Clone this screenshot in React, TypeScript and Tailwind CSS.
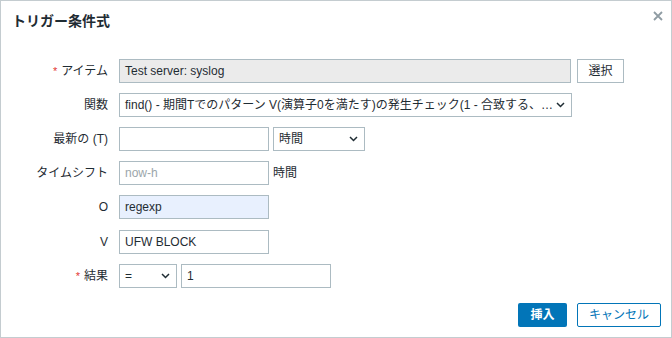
import React from "react";

const Chevron: React.FC = () => (
  <svg width="9" height="6" viewBox="0 0 9 6" className="shrink-0">
    <path d="M1 1l3.5 3.5L8 1" fill="none" stroke="#1f2c33" strokeWidth="1.5" />
  </svg>
);

const Label: React.FC<{ text: string; required?: boolean }> = ({ text, required }) => (
  <div className="w-[107px] shrink-0 text-right text-[#1f2c33]">
    {required && <span className="text-[#e33734] mr-[4px] text-[11px]">*</span>}
    {text}
  </div>
);

const inputCls =
  "h-[24px] border border-[#acbbc2] px-[5px] flex items-center text-[#1f2c33]";

const App: React.FC = () => {
  return (
    <div
      className="w-[672px] h-[338px] bg-white border border-[#c4ccd0] flex flex-col text-[12px]"
      style={{ fontFamily: '"Liberation Sans", Arial, "Noto Sans CJK JP", sans-serif' }}
    >
      <header className="h-[40px] flex items-center justify-between pl-[11px] pr-[8px] pt-[1px]">
        <h4 className="text-[14px] font-bold text-[#1f2c33]">トリガー条件式</h4>
        <svg width="10" height="10" viewBox="0 0 10 10" className="mb-[12px]">
          <path d="M1 1l8 8M9 1l-8 8" stroke="#8f9ca3" strokeWidth="1.8" />
        </svg>
      </header>
      <div className="flex flex-col gap-[10px] mt-[18px]">
        <div className="flex items-center gap-[11px]">
          <Label text="アイテム" required />
          <div className={`${inputCls} w-[452px] bg-[#ebebeb]`}>Test server: syslog</div>
          <button className="h-[24px] w-[47px] ml-[-5px] border border-[#acbbc2] bg-white text-[#1f2c33]">
            選択
          </button>
        </div>
        <div className="flex items-center gap-[11px]">
          <Label text="関数" />
          <div className={`${inputCls} w-[453px] bg-white justify-between pr-[6px]`}>
            <span className="whitespace-nowrap">
              find() - 期間Tでのパターン V(演算子0を満たす)の発生チェック(1 - 合致する、…
            </span>
            <Chevron />
          </div>
        </div>
        <div className="flex items-center gap-[11px]">
          <Label text="最新の (T)" />
          <div className="flex gap-[4px]">
            <div className={`${inputCls} w-[150px] bg-white`}></div>
            <div className={`${inputCls} w-[92px] bg-white justify-between pr-[6px]`}>
              <span>時間</span>
              <Chevron />
            </div>
          </div>
        </div>
        <div className="flex items-center gap-[11px]">
          <Label text="タイムシフト" />
          <div className="flex items-center gap-[4px]">
            <div className={`${inputCls} w-[150px] bg-white text-[#9ba6ab]`}>now-h</div>
            <span className="text-[#1f2c33]">時間</span>
          </div>
        </div>
        <div className="flex items-center gap-[11px]">
          <Label text="O" />
          <div className={`${inputCls} w-[150px] bg-[#e8f0fe]`}>regexp</div>
        </div>
        <div className="flex items-center gap-[11px] mt-[1px]">
          <Label text="V" />
          <div className={`${inputCls} w-[150px] bg-white`}>UFW BLOCK</div>
        </div>
        <div className="flex items-center gap-[11px]">
          <Label text="結果" required />
          <div className="flex gap-[4px]">
            <div className={`${inputCls} w-[58px] bg-white justify-between pr-[6px]`}>
              <span>=</span>
              <Chevron />
            </div>
            <div className={`${inputCls} w-[150px] bg-white`}>1</div>
          </div>
        </div>
      </div>
      <div className="flex justify-end gap-[10px] mt-[15px] pr-[10px]">
        <button className="h-[24px] w-[49px] bg-[#0275b8] text-white font-bold rounded-[2px]">
          挿入
        </button>
        <button className="h-[24px] w-[84px] bg-white border border-[#0275b8] text-[#0275b8] rounded-[2px]">
          キャンセル
        </button>
      </div>
    </div>
  );
};

export default App;
